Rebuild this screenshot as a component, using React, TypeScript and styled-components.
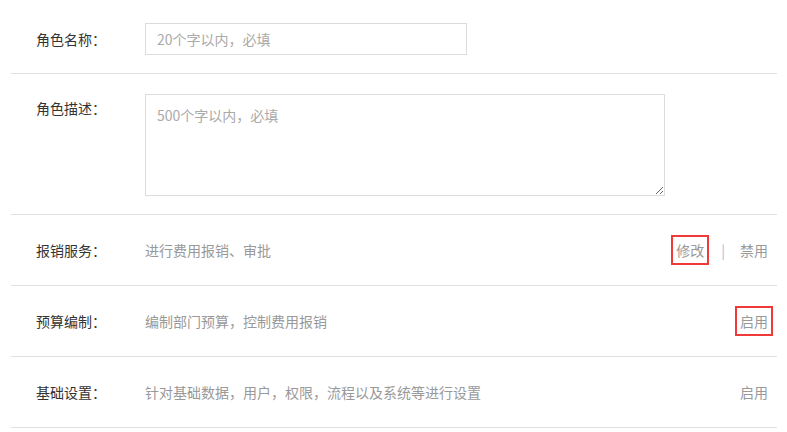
import React from "react";
import styled, { createGlobalStyle } from "styled-components";

const Global = createGlobalStyle`
  html, body { margin: 0; padding: 0; background: #fff; }
  body { font-family: "Microsoft YaHei", "Noto Sans CJK SC", "Noto Sans", sans-serif; font-size: 14px; }
  * { box-sizing: border-box; }
`;

const Page = styled.div`
  padding: 0 10px 0 11px;
`;

const Row = styled.div<{ $top?: boolean; $pt?: number; $pb?: number }>`
  display: flex;
  align-items: ${(p) => (p.$top ? "flex-start" : "center")};
  min-height: 71px;
  padding: ${(p) => p.$pt ?? 0}px 9px ${(p) => p.$pb ?? 0}px 25px;
  border-bottom: 1px solid #e0e0e0;
`;

const Label = styled.div<{ $offset?: number }>`
  width: 109px;
  flex: none;
  color: #333;
  line-height: 20px;
  margin-top: ${(p) => p.$offset ?? 0}px;
`;

const TextInput = styled.input`
  width: 322px;
  height: 32px;
  border: 1px solid #dcdcdc;
  padding: 0 11px;
  font: inherit;
  font-size: 14px;
  color: #333;
  outline: none;
  &::placeholder { color: #aaa; }
`;

const TextArea = styled.textarea`
  width: 520px;
  height: 102px;
  border: 1px solid #dcdcdc;
  padding: 10px 11px;
  font: inherit;
  font-size: 14px;
  line-height: 20px;
  color: #333;
  outline: none;
  display: block;
  &::placeholder { color: #aaa; }
`;

const Desc = styled.div`
  flex: 1;
  color: #999;
  line-height: 20px;
`;

const Actions = styled.div`
  display: flex;
  align-items: center;
  line-height: 20px;
`;

const Action = styled.span<{ $marked?: boolean }>`
  color: #999;
  cursor: pointer;
  outline: ${(p) => (p.$marked ? "2px solid #f03a3a" : "none")};
  outline-offset: 3px;
`;

const Sep = styled.span`
  color: #a9bcd6;
  margin: 0 15px 0 17px;
`;

export default function App() {
  return (
    <>
      <Global />
      <Page>
        <Row $pt={23} $pb={18}>
          <Label>角色名称：</Label>
          <TextInput placeholder="20个字以内，必填" />
        </Row>
        <Row $top $pt={20} $pb={18}>
          <Label $offset={4}>角色描述：</Label>
          <TextArea placeholder="500个字以内，必填" />
        </Row>
        <Row>
          <Label>报销服务：</Label>
          <Desc>进行费用报销、审批</Desc>
          <Actions>
            <Action $marked>修改</Action>
            <Sep>|</Sep>
            <Action>禁用</Action>
          </Actions>
        </Row>
        <Row>
          <Label>预算编制：</Label>
          <Desc>编制部门预算，控制费用报销</Desc>
          <Actions>
            <Action $marked>启用</Action>
          </Actions>
        </Row>
        <Row>
          <Label>基础设置：</Label>
          <Desc>针对基础数据，用户，权限，流程以及系统等进行设置</Desc>
          <Actions>
            <Action>启用</Action>
          </Actions>
        </Row>
      </Page>
    </>
  );
}
